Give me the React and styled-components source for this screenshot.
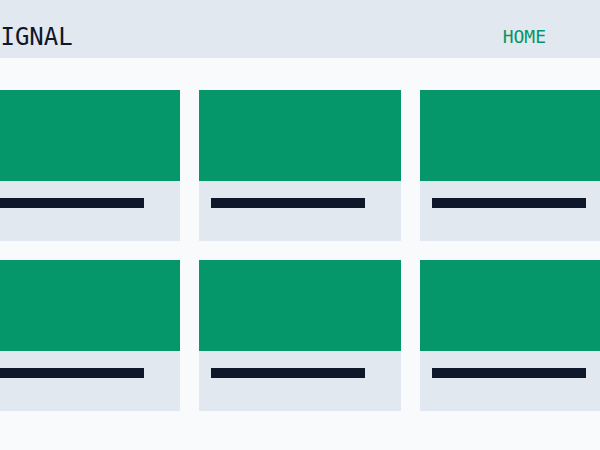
import styled, { createGlobalStyle } from 'styled-components'

const GlobalStyle = createGlobalStyle`
  html, body {
    margin: 0;
    padding: 0;
    background: #f8fafc;
    overflow: hidden;
    font-family: "DejaVu Sans Mono", "Liberation Mono", monospace;
  }
`

const Page = styled.div`
  width: 600px;
  min-height: 450px;
  background: #f8fafc;
  overflow: hidden;
`

const Header = styled.header`
  height: 58px;
  background: #e2e8f0;
  display: flex;
  align-items: center;
  justify-content: space-between;
  padding: 15px 54px 0 0;
  box-sizing: border-box;
  margin-left: -14px;
`

const Logo = styled.div`
  color: #0f172a;
  font-size: 24px;
  font-weight: 500;
`

const NavLink = styled.a`
  color: #059669;
  font-size: 18px;
  font-weight: 500;
  text-decoration: none;
`

const Grid = styled.main`
  display: grid;
  grid-template-columns: repeat(3, 202px);
  gap: 19px;
  margin: 32px 0 0 -22px;
`

const Card = styled.div`
  display: flex;
  flex-direction: column;
  background: #e2e8f0;
`

const Cover = styled.div`
  height: 91px;
  background: #059669;
`

const Body = styled.div`
  height: 60px;
  padding: 17px 12px 0;
  box-sizing: border-box;
`

const Bar = styled.div`
  width: 154px;
  height: 10px;
  background: #0f172a;
`

export default function App() {
  const cards = [1, 2, 3, 4, 5, 6]
  return (
    <Page>
      <GlobalStyle />
      <Header>
        <Logo>SIGNAL</Logo>
        <NavLink href="#">HOME</NavLink>
      </Header>
      <Grid>
        {cards.map((c) => (
          <Card key={c}>
            <Cover />
            <Body>
              <Bar />
            </Body>
          </Card>
        ))}
      </Grid>
    </Page>
  )
}
